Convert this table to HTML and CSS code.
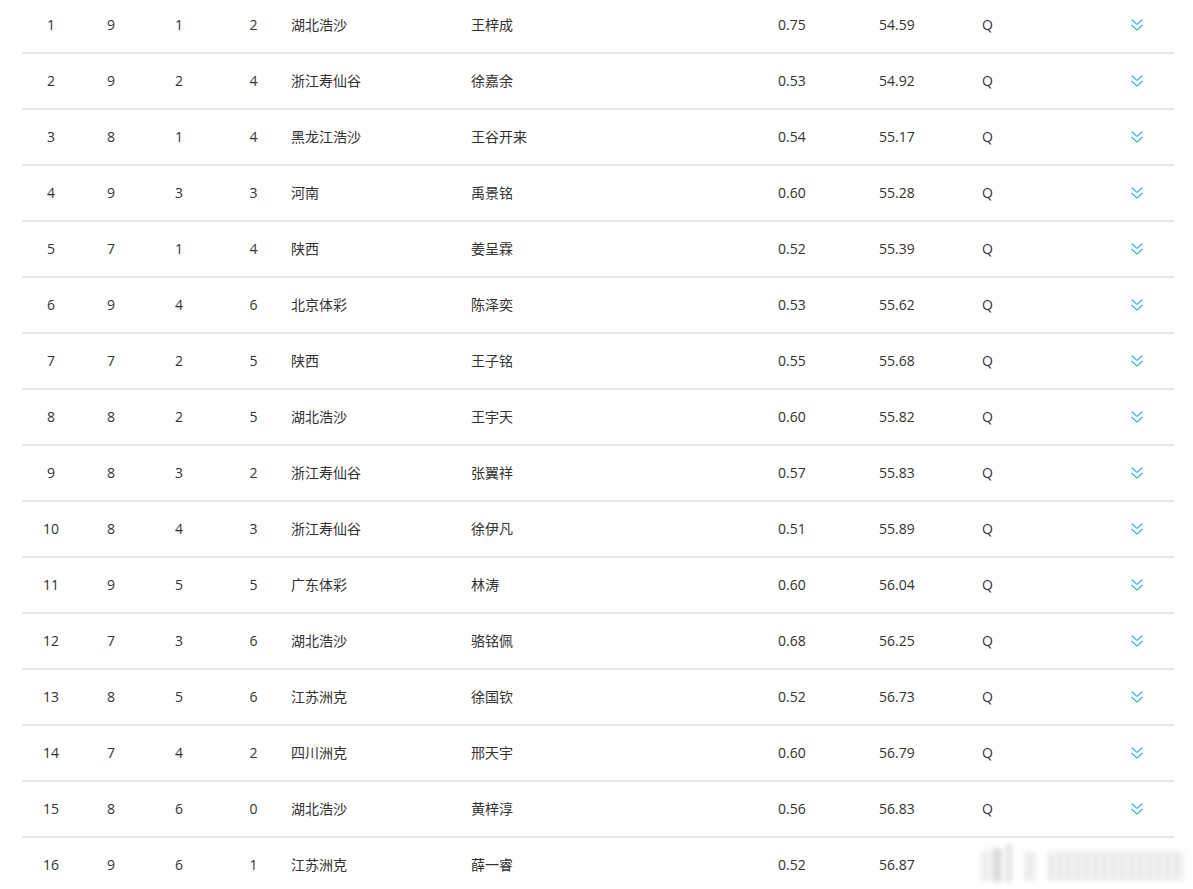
FILE: index.html
```html
<!DOCTYPE html>
<html lang="zh-CN">
<head>
<meta charset="utf-8">
<title>成绩</title>
<link rel="stylesheet" href="styles.css">
</head>
<body>
<div class="table">
  <div class="row"><span class="c n">1</span><span class="c n">9</span><span class="c n">1</span><span class="c n">2</span><span class="c t">湖北浩沙</span><span class="c t">王梓成</span><span class="c t">0.75</span><span class="c t">54.59</span><span class="c t">Q</span><span class="c i"><svg viewBox="0 0 14 14"><path d="M1.5 1.5 7 6.5 12.5 1.5M1.5 7 7 12 12.5 7"/></svg></span></div>
  <div class="row"><span class="c n">2</span><span class="c n">9</span><span class="c n">2</span><span class="c n">4</span><span class="c t">浙江寿仙谷</span><span class="c t">徐嘉余</span><span class="c t">0.53</span><span class="c t">54.92</span><span class="c t">Q</span><span class="c i"><svg viewBox="0 0 14 14"><path d="M1.5 1.5 7 6.5 12.5 1.5M1.5 7 7 12 12.5 7"/></svg></span></div>
  <div class="row"><span class="c n">3</span><span class="c n">8</span><span class="c n">1</span><span class="c n">4</span><span class="c t">黑龙江浩沙</span><span class="c t">王谷开来</span><span class="c t">0.54</span><span class="c t">55.17</span><span class="c t">Q</span><span class="c i"><svg viewBox="0 0 14 14"><path d="M1.5 1.5 7 6.5 12.5 1.5M1.5 7 7 12 12.5 7"/></svg></span></div>
  <div class="row"><span class="c n">4</span><span class="c n">9</span><span class="c n">3</span><span class="c n">3</span><span class="c t">河南</span><span class="c t">禹景铭</span><span class="c t">0.60</span><span class="c t">55.28</span><span class="c t">Q</span><span class="c i"><svg viewBox="0 0 14 14"><path d="M1.5 1.5 7 6.5 12.5 1.5M1.5 7 7 12 12.5 7"/></svg></span></div>
  <div class="row"><span class="c n">5</span><span class="c n">7</span><span class="c n">1</span><span class="c n">4</span><span class="c t">陕西</span><span class="c t">姜呈霖</span><span class="c t">0.52</span><span class="c t">55.39</span><span class="c t">Q</span><span class="c i"><svg viewBox="0 0 14 14"><path d="M1.5 1.5 7 6.5 12.5 1.5M1.5 7 7 12 12.5 7"/></svg></span></div>
  <div class="row"><span class="c n">6</span><span class="c n">9</span><span class="c n">4</span><span class="c n">6</span><span class="c t">北京体彩</span><span class="c t">陈泽奕</span><span class="c t">0.53</span><span class="c t">55.62</span><span class="c t">Q</span><span class="c i"><svg viewBox="0 0 14 14"><path d="M1.5 1.5 7 6.5 12.5 1.5M1.5 7 7 12 12.5 7"/></svg></span></div>
  <div class="row"><span class="c n">7</span><span class="c n">7</span><span class="c n">2</span><span class="c n">5</span><span class="c t">陕西</span><span class="c t">王子铭</span><span class="c t">0.55</span><span class="c t">55.68</span><span class="c t">Q</span><span class="c i"><svg viewBox="0 0 14 14"><path d="M1.5 1.5 7 6.5 12.5 1.5M1.5 7 7 12 12.5 7"/></svg></span></div>
  <div class="row"><span class="c n">8</span><span class="c n">8</span><span class="c n">2</span><span class="c n">5</span><span class="c t">湖北浩沙</span><span class="c t">王宇天</span><span class="c t">0.60</span><span class="c t">55.82</span><span class="c t">Q</span><span class="c i"><svg viewBox="0 0 14 14"><path d="M1.5 1.5 7 6.5 12.5 1.5M1.5 7 7 12 12.5 7"/></svg></span></div>
  <div class="row"><span class="c n">9</span><span class="c n">8</span><span class="c n">3</span><span class="c n">2</span><span class="c t">浙江寿仙谷</span><span class="c t">张翼祥</span><span class="c t">0.57</span><span class="c t">55.83</span><span class="c t">Q</span><span class="c i"><svg viewBox="0 0 14 14"><path d="M1.5 1.5 7 6.5 12.5 1.5M1.5 7 7 12 12.5 7"/></svg></span></div>
  <div class="row"><span class="c n">10</span><span class="c n">8</span><span class="c n">4</span><span class="c n">3</span><span class="c t">浙江寿仙谷</span><span class="c t">徐伊凡</span><span class="c t">0.51</span><span class="c t">55.89</span><span class="c t">Q</span><span class="c i"><svg viewBox="0 0 14 14"><path d="M1.5 1.5 7 6.5 12.5 1.5M1.5 7 7 12 12.5 7"/></svg></span></div>
  <div class="row"><span class="c n">11</span><span class="c n">9</span><span class="c n">5</span><span class="c n">5</span><span class="c t">广东体彩</span><span class="c t">林涛</span><span class="c t">0.60</span><span class="c t">56.04</span><span class="c t">Q</span><span class="c i"><svg viewBox="0 0 14 14"><path d="M1.5 1.5 7 6.5 12.5 1.5M1.5 7 7 12 12.5 7"/></svg></span></div>
  <div class="row"><span class="c n">12</span><span class="c n">7</span><span class="c n">3</span><span class="c n">6</span><span class="c t">湖北浩沙</span><span class="c t">骆铭佩</span><span class="c t">0.68</span><span class="c t">56.25</span><span class="c t">Q</span><span class="c i"><svg viewBox="0 0 14 14"><path d="M1.5 1.5 7 6.5 12.5 1.5M1.5 7 7 12 12.5 7"/></svg></span></div>
  <div class="row"><span class="c n">13</span><span class="c n">8</span><span class="c n">5</span><span class="c n">6</span><span class="c t">江苏洲克</span><span class="c t">徐国钦</span><span class="c t">0.52</span><span class="c t">56.73</span><span class="c t">Q</span><span class="c i"><svg viewBox="0 0 14 14"><path d="M1.5 1.5 7 6.5 12.5 1.5M1.5 7 7 12 12.5 7"/></svg></span></div>
  <div class="row"><span class="c n">14</span><span class="c n">7</span><span class="c n">4</span><span class="c n">2</span><span class="c t">四川洲克</span><span class="c t">邢天宇</span><span class="c t">0.60</span><span class="c t">56.79</span><span class="c t">Q</span><span class="c i"><svg viewBox="0 0 14 14"><path d="M1.5 1.5 7 6.5 12.5 1.5M1.5 7 7 12 12.5 7"/></svg></span></div>
  <div class="row"><span class="c n">15</span><span class="c n">8</span><span class="c n">6</span><span class="c n">0</span><span class="c t">湖北浩沙</span><span class="c t">黄梓淳</span><span class="c t">0.56</span><span class="c t">56.83</span><span class="c t">Q</span><span class="c i"><svg viewBox="0 0 14 14"><path d="M1.5 1.5 7 6.5 12.5 1.5M1.5 7 7 12 12.5 7"/></svg></span></div>
  <div class="row"><span class="c n">16</span><span class="c n">9</span><span class="c n">6</span><span class="c n">1</span><span class="c t">江苏洲克</span><span class="c t">薛一睿</span><span class="c t">0.52</span><span class="c t">56.87</span><span class="c t">Q</span><span class="c i"><svg viewBox="0 0 14 14"><path d="M1.5 1.5 7 6.5 12.5 1.5M1.5 7 7 12 12.5 7"/></svg></span></div>
</div>
<div class="watermark" aria-hidden="true">
  <span class="wm wm-a"></span><span class="wm wm-b"></span><span class="wm wm-c"></span><span class="wm wm-d"></span><span class="wm wm-e"></span>
</div>
</body>
</html>
```
FILE: styles.css
```css
html, body {
  margin: 0;
  padding: 0;
  background: #fff;
  overflow: hidden;
}
body {
  font-family: "Open Sans", "Noto Sans CJK SC", sans-serif;
  font-size: 14px;
  color: #333;
  height: 889px;
  position: relative;
}
.table {
  margin: -2px 19px 0 22px;
}
.row {
  display: grid;
  grid-template-columns: 58px 62px 74px 75px 180px 307px 101px 103px 118px 74px;
  height: 54px;
  align-items: center;
  border-bottom: 2px solid #e8e8e8;
}
.c {
  white-space: nowrap;
  line-height: 20px;
}
.n { text-align: center; }
.t { text-align: left; }
.i {
  display: flex;
  justify-content: center;
}
.i svg {
  width: 14px;
  height: 14px;
  fill: none;
  stroke: #3cb3d6;
  stroke-width: 1.2;
}
.watermark {
  position: absolute;
  left: 972px;
  top: 843px;
  width: 218px;
  height: 42px;
  background: #fff;
  display: flex;
  align-items: flex-end;
}
.wm {
  display: block;
  filter: blur(2.5px);
}
.wm-a {
  width: 10px;
  height: 30px;
  margin: 0 2px 4px 8px;
  background: #efefef;
}
.wm-b {
  width: 10px;
  height: 34px;
  margin: 0 4px 3px 0;
  background: #dcdcdc;
}
.wm-c {
  width: 6px;
  height: 38px;
  margin: 0 12px 3px 0;
  background: #e2e2e2;
}
.wm-d {
  width: 12px;
  height: 30px;
  margin: 0 12px 4px 0;
  background: #eeeeee;
}
.wm-e {
  flex: 1;
  height: 30px;
  margin: 0 6px 4px 0;
  background: repeating-linear-gradient(90deg, #e8e8e8 0 5px, #f5f5f5 5px 9px);
}
```
